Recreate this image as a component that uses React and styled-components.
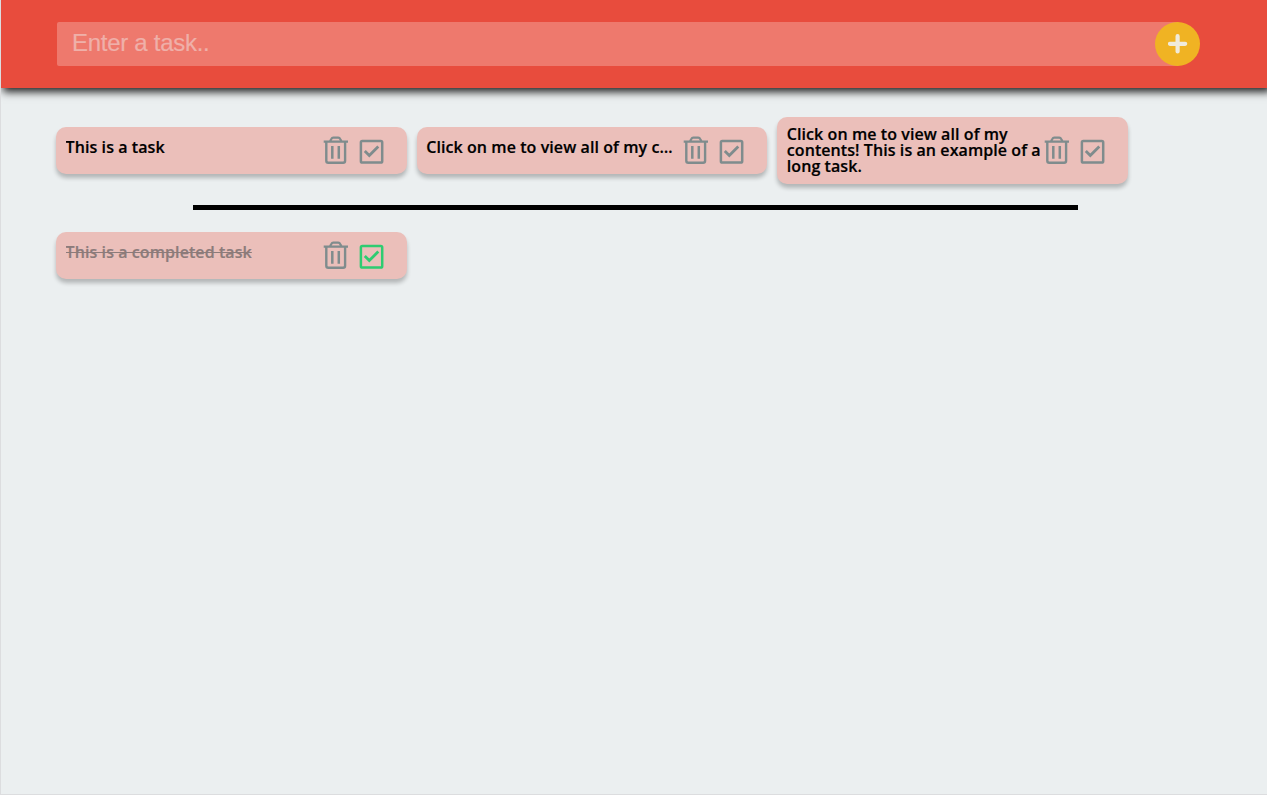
import React from "react";
import styled, { createGlobalStyle } from "styled-components";

const GlobalStyle = createGlobalStyle`
  *, *::before, *::after { box-sizing: border-box; }
  body { margin: 0; background: #ebeff0; }
`;

const Page = styled.div`
  height: 100vh;
  overflow: hidden;
  background: #ebeff0;
  border-left: 1px solid #dcdddf;
  border-bottom: 1px solid #dcdddf;
  font-family: "Open Sans", sans-serif;
`;

const Header = styled.header`
  height: 88px;
  padding: 22px 67px 0 56px;
  background: #e84c3d;
  box-shadow: 3px 3px 8px 1px rgba(0, 0, 0, 0.85);
`;

const TaskForm = styled.form`
  display: flex;
  height: 44px;
`;

const TaskInput = styled.input`
  flex: 1;
  min-width: 0;
  height: 44px;
  padding: 0 15px 2px;
  border: 0;
  border-radius: 2px;
  outline: 0;
  background: rgba(255, 255, 255, 0.25);
  color: #fff;
  font: 24px "Liberation Sans", Arial, sans-serif;
  letter-spacing: -0.28px;
  &::placeholder { color: #efb0a9; opacity: 1; -webkit-text-stroke: 0.2px #efb0a9; }
`;

const AddButton = styled.button`
  display: grid;
  place-items: center;
  width: 45px;
  height: 44px;
  margin-left: -24px;
  padding: 0;
  border: 0;
  border-radius: 50%;
  background: #f0b323;
  z-index: 1;
`;

const Board = styled.main`
  padding: 29px 55px 0;
`;

const TaskRow = styled.section`
  display: flex;
  align-items: center;
  gap: 10px;
`;

const Card = styled.article`
  display: flex;
  align-items: center;
  width: 350.6px;
  height: ${({ $open }) => ($open ? "67px" : "47px")};
  padding-left: 9.6px;
  border-radius: 10px;
  background: #ebbfba;
  box-shadow: 0 4px 4px rgba(0, 0, 0, 0.24);
`;

const TaskText = styled.p`
  flex: none;
  width: ${({ $open }) => ($open ? "257px" : "253px")};
  margin: 0 ${({ $open }) => ($open ? "1px" : "5px")} 0 0;
  padding-bottom: ${({ $open }) => ($open ? "1px" : "7px")};
  font-size: 16px;
  font-weight: 600;
  letter-spacing: 0.08px;
  -webkit-text-stroke: 0.2px currentColor;
  line-height: ${({ $open }) => ($open ? "16px" : "22px")};
  color: ${({ $done }) => ($done ? "#8c7b7a" : "#000")};
  text-decoration: ${({ $done }) => ($done ? "line-through" : "none")};
  white-space: ${({ $open }) => ($open ? "normal" : "nowrap")};
  overflow: ${({ $open }) => ($open ? "visible" : "hidden")};
  text-overflow: ellipsis;
`;

const Actions = styled.div`
  display: flex;
  gap: 12px;
  padding-bottom: 1px;
`;

const IconButton = styled.button`
  display: block;
  width: 24px;
  height: 28px;
  padding: 0;
  border: 0;
  background: none;
  color: ${({ $active }) => ($active ? "#2ecc71" : "#7f8c8d")};
  svg { display: block; overflow: visible; }
`;

const Divider = styled.hr`
  width: 885px;
  height: 5px;
  margin: 21px 0 22px 137px;
  border: 0;
  background: #000;
`;

const TrashIcon = () => (
  <svg width="24" height="28" viewBox="0 0 24 28" fill="none" stroke="currentColor" strokeWidth="2.2">
    <path d="M-.3 5.7h24.3M6 5.2l1.3-2.2Q8 1.7 9.2 1.7h5.1Q15.6 1.7 16.2 3l1.3 2.2" />
    <path d="M2.3 5.7v19q0 2 2 2h14.8q2 0 2-2v-19" strokeWidth="2.4" />
    <path d="M8.3 10v12.7M14.8 10v12.7" strokeWidth="2.5" />
  </svg>
);

const CheckIcon = () => (
  <svg width="24" height="28" viewBox="0 0 24 28" fill="none" stroke="currentColor" strokeWidth="2.5">
    <rect x="0.9" y="4.9" width="21.3" height="21.7" rx="1.4" />
    <path d="M4.8 15.1l4.5 4.5 9-9" strokeWidth="2.8" />
  </svg>
);

const PlusIcon = () => (
  <svg width="20" height="20" viewBox="0 0 20 20" fill="none" stroke="#f0ebdc" strokeWidth="4.2" strokeLinecap="round">
    <path d="M9.6 2.2v15.2M2 9.8h15.2" />
  </svg>
);

const Task = ({ text, open, done }) => (
  <Card $open={open}>
    <TaskText $open={open} $done={done}>{text}</TaskText>
    <Actions>
      <IconButton type="button" aria-label="Delete"><TrashIcon /></IconButton>
      <IconButton type="button" aria-label="Complete" $active={done}><CheckIcon /></IconButton>
    </Actions>
  </Card>
);

const longText = "Click on me to view all of my contents! This is an example of a long task.";

export default function App() {
  return (
    <>
      <GlobalStyle />
      <Page>
        <Header>
          <TaskForm>
            <TaskInput placeholder="Enter a task.." />
            <AddButton type="button" aria-label="Add"><PlusIcon /></AddButton>
          </TaskForm>
        </Header>
        <Board>
          <TaskRow>
            <Task text="This is a task" />
            <Task text={longText} />
            <Task text={longText} open />
          </TaskRow>
          <Divider />
          <TaskRow>
            <Task text="This is a completed task" done />
          </TaskRow>
        </Board>
      </Page>
    </>
  );
}
